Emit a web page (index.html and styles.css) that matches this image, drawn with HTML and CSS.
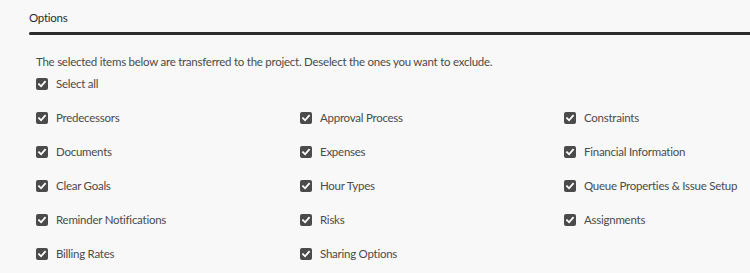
FILE: index.html
```html
<!DOCTYPE html>
<html>
<head>
<meta charset="utf-8">
<link rel="stylesheet" href="styles.css">
</head>
<body>
<div class="panel">
  <div class="tabs">
    <div class="tab">Options</div>
  </div>
  <div class="content">
    <p class="desc">The selected items below are transferred to the project. Deselect the ones you want to exclude.</p>
    <label class="check"><span class="box"><svg viewBox="0 0 12 12"><path d="M3 6.2 L5.1 8.3 L9 3.8" /></svg></span>Select all</label>
    <div class="grid">
      <label class="check"><span class="box"><svg viewBox="0 0 12 12"><path d="M3 6.2 L5.1 8.3 L9 3.8" /></svg></span>Predecessors</label>
      <label class="check"><span class="box"><svg viewBox="0 0 12 12"><path d="M3 6.2 L5.1 8.3 L9 3.8" /></svg></span>Approval Process</label>
      <label class="check"><span class="box"><svg viewBox="0 0 12 12"><path d="M3 6.2 L5.1 8.3 L9 3.8" /></svg></span>Constraints</label>
      <label class="check"><span class="box"><svg viewBox="0 0 12 12"><path d="M3 6.2 L5.1 8.3 L9 3.8" /></svg></span>Documents</label>
      <label class="check"><span class="box"><svg viewBox="0 0 12 12"><path d="M3 6.2 L5.1 8.3 L9 3.8" /></svg></span>Expenses</label>
      <label class="check"><span class="box"><svg viewBox="0 0 12 12"><path d="M3 6.2 L5.1 8.3 L9 3.8" /></svg></span>Financial Information</label>
      <label class="check"><span class="box"><svg viewBox="0 0 12 12"><path d="M3 6.2 L5.1 8.3 L9 3.8" /></svg></span>Clear Goals</label>
      <label class="check"><span class="box"><svg viewBox="0 0 12 12"><path d="M3 6.2 L5.1 8.3 L9 3.8" /></svg></span>Hour Types</label>
      <label class="check"><span class="box"><svg viewBox="0 0 12 12"><path d="M3 6.2 L5.1 8.3 L9 3.8" /></svg></span>Queue Properties &amp; Issue Setup</label>
      <label class="check"><span class="box"><svg viewBox="0 0 12 12"><path d="M3 6.2 L5.1 8.3 L9 3.8" /></svg></span>Reminder Notifications</label>
      <label class="check"><span class="box"><svg viewBox="0 0 12 12"><path d="M3 6.2 L5.1 8.3 L9 3.8" /></svg></span>Risks</label>
      <label class="check"><span class="box"><svg viewBox="0 0 12 12"><path d="M3 6.2 L5.1 8.3 L9 3.8" /></svg></span>Assignments</label>
      <label class="check"><span class="box"><svg viewBox="0 0 12 12"><path d="M3 6.2 L5.1 8.3 L9 3.8" /></svg></span>Billing Rates</label>
      <label class="check"><span class="box"><svg viewBox="0 0 12 12"><path d="M3 6.2 L5.1 8.3 L9 3.8" /></svg></span>Sharing Options</label>
    </div>
  </div>
</div>
</body>
</html>
```
FILE: styles.css
```css
html, body {
  margin: 0;
  padding: 0;
  background: #f8f8f8;
}
body {
  font-family: "Lato", "Open Sans", sans-serif;
  color: #4b4b4b;
  font-size: 11.5px;
  letter-spacing: -0.25px;
}
.panel {
  padding-left: 29px;
}
.tabs {
  height: 32px;
  border-bottom: 1px solid #dcdcdc;
  position: relative;
}
.tab {
  color: #2c2c2c;
  padding-top: 10px;
  line-height: 16px;
}
.tabs::after {
  content: "";
  position: absolute;
  left: 0;
  right: 0;
  bottom: -3px;
  height: 3px;
  background: #2c2c2c;
  border-radius: 2px 0 0 2px;
}
.content {
  padding-left: 7px;
  padding-top: 21px;
}
.desc {
  margin: 0;
  line-height: 16px;
  height: 16px;
}
.check {
  display: flex;
  align-items: center;
  height: 34px;
  line-height: 16px;
  white-space: nowrap;
}
.content > .check {
  height: 28px;
}
.box {
  width: 12px;
  height: 12px;
  border-radius: 2px;
  background: #4b4b4b;
  margin-right: 8px;
  flex: none;
  display: flex;
}
.box svg {
  width: 12px;
  height: 12px;
  fill: none;
  stroke: #fff;
  stroke-width: 1.8;
  stroke-linecap: square;
}
.grid {
  margin-top: 3px;
  display: grid;
  grid-template-columns: 264px 264px 1fr;
}
```
